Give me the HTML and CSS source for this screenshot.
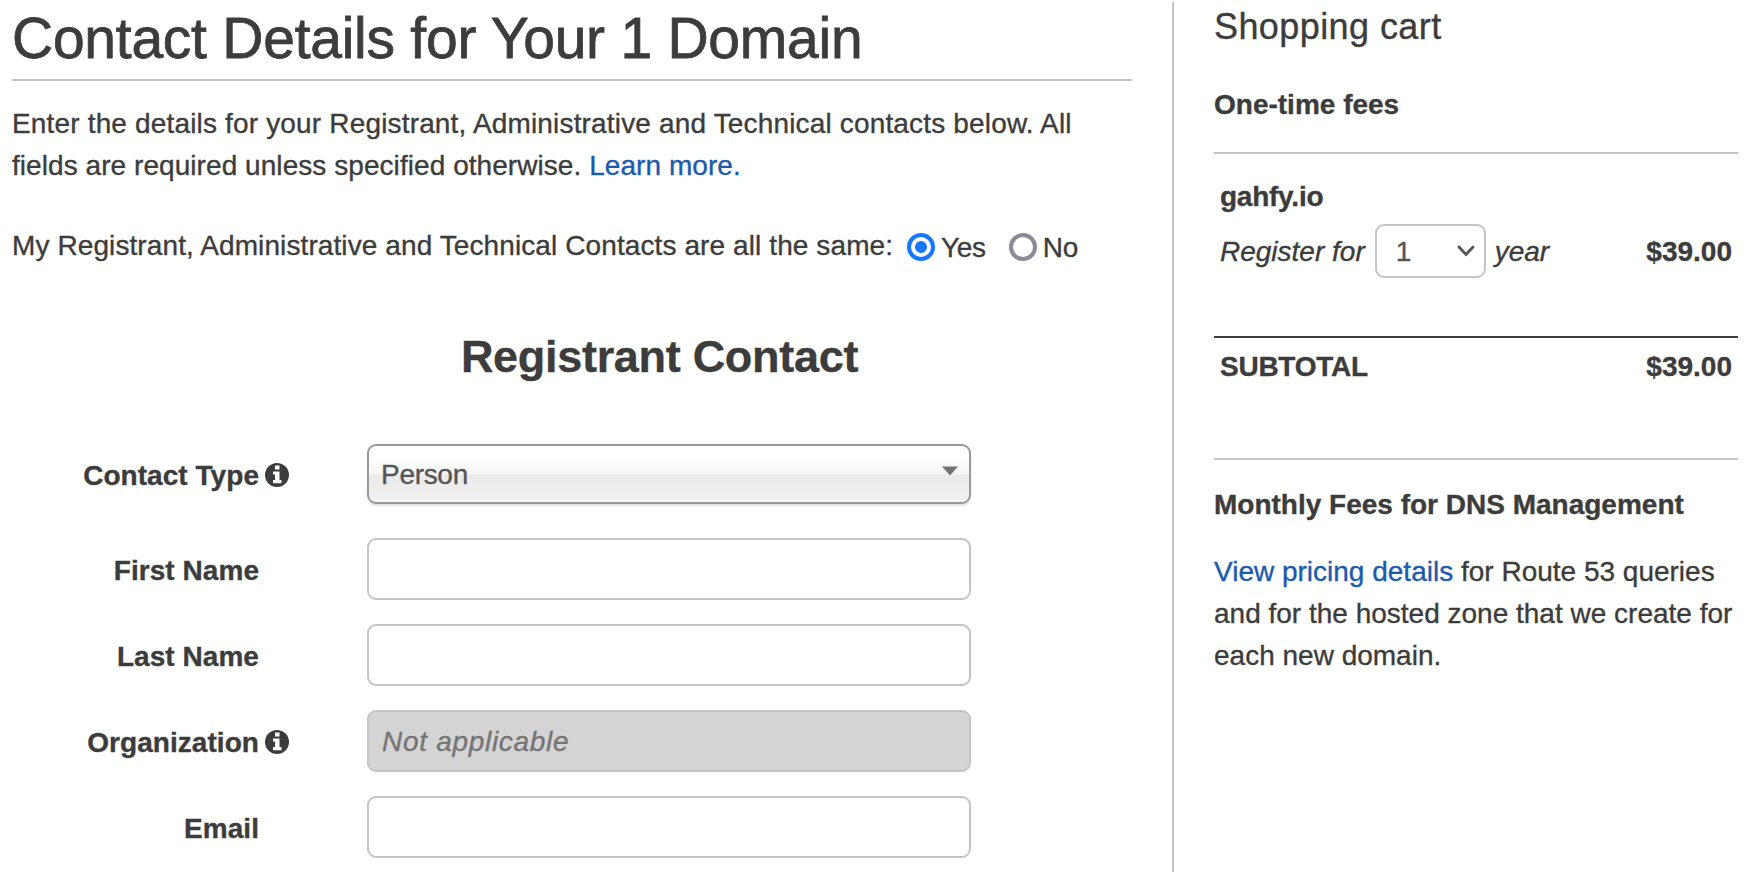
FILE: index.html
```html
<!DOCTYPE html>
<html lang="en">
<head>
<meta charset="utf-8">
<title>Contact Details</title>
<link rel="stylesheet" href="styles.css">
</head>
<body>
<div class="page">
  <main class="main">
    <h1 class="title">Contact Details for Your 1 Domain</h1>
    <p class="intro"><span class="intro-lead">Enter the details for your Registrant, Administrative and Technical contacts below. All</span><br>fields are required unless specified otherwise. <a class="link" href="#">Learn more.</a></p>
    <div class="same">
      <span class="same-text">My Registrant, Administrative and Technical Contacts are all the same:</span>
      <label class="choice"><span class="radio radio-on"></span><span>Yes</span></label>
      <label class="choice"><span class="radio"></span><span>No</span></label>
    </div>
    <h2 class="section">Registrant Contact</h2>
    <form class="form">
      <div class="row row-select">
        <span class="label">Contact Type</span>
        <svg class="info" viewBox="0 0 24 24"><circle cx="12" cy="12" r="12"/><path d="M10 2.500h4.500v4H10zM8 8.500h6.500v8.500h2v3.200H8V17h2v-5.500H8z"/></svg>
        <div class="field select"><span class="value">Person</span><svg class="caret" viewBox="0 0 16 9"><path d="M0 0h16L8 9z"/></svg></div>
      </div>
      <div class="row"><span class="label">First Name</span><span class="info"></span><div class="field"></div></div>
      <div class="row"><span class="label">Last Name</span><span class="info"></span><div class="field"></div></div>
      <div class="row">
        <span class="label">Organization</span>
        <svg class="info" viewBox="0 0 24 24"><circle cx="12" cy="12" r="12"/><path d="M10 2.500h4.500v4H10zM8 8.500h6.500v8.500h2v3.200H8V17h2v-5.500H8z"/></svg>
        <div class="field disabled">Not applicable</div>
      </div>
      <div class="row"><span class="label">Email</span><span class="info"></span><div class="field"></div></div>
    </form>
  </main>
  <aside class="cart">
    <h3 class="cart-title">Shopping cart</h3>
    <h4 class="fees">One-time fees</h4>
    <div class="item">
      <div class="domain">gahfy.io</div>
      <div class="term">
        <em class="term-text">Register for</em>
        <div class="years"><span class="term-text">1</span><svg class="chevron" viewBox="0 0 18 12"><path d="M2 2l7 7.500 7-7.500"/></svg></div>
        <em class="term-text">year</em>
        <b class="price term-text">$39.00</b>
      </div>
    </div>
    <div class="subtotal"><span class="subtotal-label">SUBTOTAL</span><span>$39.00</span></div>
    <h4 class="monthly">Monthly Fees for DNS Management</h4>
    <p class="pricing"><a class="link" href="#">View pricing details</a> for Route 53 queries<br>and for the hosted zone that we create for<br>each new domain.</p>
  </aside>
</div>
</body>
</html>
```

FILE: styles.css
```css
* { box-sizing: border-box; }
body {
  margin: 0;
  background: #fff;
  color: #3c3c3c;
  font: 28px/42px "Liberation Sans", Arial, sans-serif;
  -webkit-text-stroke: .35px;
}
h1, h2, h3, h4, p { margin: 0; }
.page { display: flex; height: 872px; padding-top: 2px; overflow: hidden; }
.main { width: 1172px; padding: 0 40px 0 12px; }
.link { color: #1b5bab; text-decoration: none; }

.title {
  height: 79px;
  padding-top: 4px;
  border-bottom: 2px solid #c4c4c4;
  font-size: 57px;
  font-weight: 400;
  line-height: 64px;
  letter-spacing: -.25px;
  -webkit-text-stroke: .8px;
}
.intro { padding-top: 22px; letter-spacing: .06px; white-space: nowrap; }
.intro-lead { letter-spacing: .165px; }
.same { display: flex; align-items: center; height: 42px; margin-top: 38px; }
.same-text { width: 883px; white-space: nowrap; letter-spacing: .1px; }
.choice { display: flex; align-items: center; gap: 6px; margin: 3px 11px 0 12px; letter-spacing: -.3px; }
.radio { width: 28px; height: 28px; margin-top: -2px; border: 4px solid #8a8a98; border-radius: 50%; background: #fff; }
.radio-on { border-color: #1677ff; background: radial-gradient(circle, #1677ff 0 5.500px, #fff 6.300px); }
.section { margin-top: 52px; padding-left: 175px; text-align: center; font-size: 45px; line-height: 76px; letter-spacing: -.3px; }

.form { margin-top: 49px; }
.row { display: flex; align-items: center; height: 62px; margin-bottom: 24px; }
.row-select { height: 60px; margin-bottom: 34px; }
.label { width: 247px; padding-top: 3px; text-align: right; font-weight: 700; white-space: nowrap; letter-spacing: .05px; }
.info { width: 24px; height: 24px; margin: 2px 78px 0 6px; flex: none; }
.info circle { fill: #3c3c3c; }
.info path { fill: #fff; stroke: none; }
.field {
  display: flex;
  align-items: center;
  justify-content: space-between;
  width: 604px;
  height: 100%;
  padding: 2px 11px 0 13px;
  border: 2px solid #c4c4c4;
  border-radius: 9px;
  background: #fff;
}
.select {
  padding: 1px 11px 0 12px;
  border-color: #999;
  color: #555;
  letter-spacing: -.3px;
  background: linear-gradient(#fff 0, #fff 22%, #f5f5f5 50%, #eaeaea 52%, #f1f1f1 94%, #f7f7f7);
  box-shadow: 0 2px 2px rgba(0, 0, 0, .12);
}
.caret { width: 16px; height: 10px; margin-bottom: 8px; fill: #727272; }
.disabled { background: #d4d4d4; color: #757575; font-style: italic; letter-spacing: .7px; }

.cart { flex: 1; padding: 0 22px 0 40px; border-left: 2px solid #c4c4c4; }
.cart-title { height: 50px; font-size: 36px; font-weight: 400; line-height: 50px; letter-spacing: .42px; }
.fees { height: 102px; padding-top: 32px; border-bottom: 2px solid #c4c4c4; font-size: 28px; }
.item { height: 182px; padding: 22px 6px 0; }
.domain { font-weight: 700; letter-spacing: -.25px; }
.term { display: flex; align-items: center; height: 54px; margin-top: 6px; }
.term-text { padding-top: 2px; }
.years {
  display: flex;
  align-items: center;
  justify-content: space-between;
  width: 111px;
  height: 54px;
  margin: 0 9px 0 10px;
  padding: 0 9px 0 19px;
  border: 2px solid #c4c4c4;
  border-radius: 9px;
  color: #555;
}
.chevron { width: 18px; height: 12px; fill: none; stroke: #555; stroke-width: 2.800; stroke-linecap: round; }
.price { margin-left: auto; }
.subtotal {
  display: flex;
  justify-content: space-between;
  height: 122px;
  padding: 8px 6px 0;
  border-top: 2px solid #3c3c3c;
  font-weight: 700;
}
.subtotal-label { letter-spacing: -.25px; }
.monthly { height: 67px; padding-top: 24px; border-top: 2px solid #c4c4c4; font-size: 28px; }
.pricing { padding-top: 26px; white-space: nowrap; }
```
